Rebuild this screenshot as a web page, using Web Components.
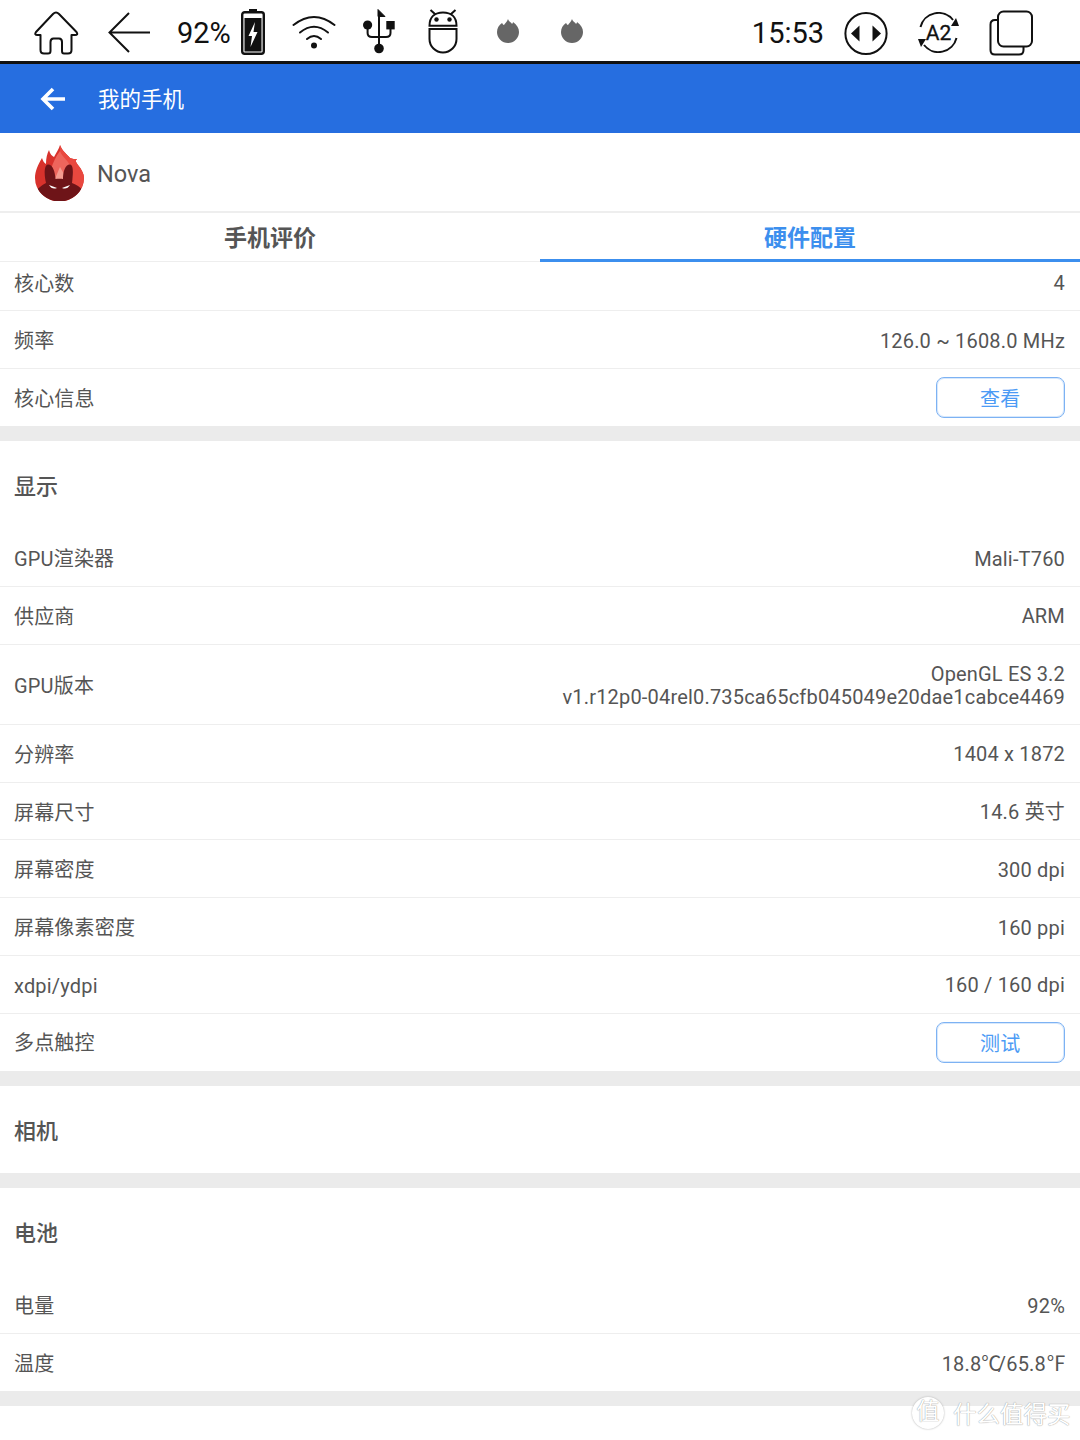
<!DOCTYPE html>
<html lang="zh">
<head>
<meta charset="utf-8">
<title>我的手机</title>
<style>
  html, body { margin: 0; background: #fff; }
  body {
    width: 1080px;
    min-height: 1440px;
    position: relative;
    overflow: hidden;
    font-family: Roboto, "Noto Sans CJK SC", sans-serif;
    color: #555;
  }
</style>
</head>
<body>
<status-bar></status-bar>
<app-bar title="我的手机"></app-bar>
<device-head name="Nova"></device-head>
<tab-strip left="手机评价" right="硬件配置"></tab-strip>

<spec-section>
  <spec-row first label="核心数" value="4"></spec-row>
  <spec-row label="频率" value="126.0 ~ 1608.0 MHz"></spec-row>
  <spec-row label="核心信息" action="查看" plain></spec-row>
</spec-section>

<spec-section heading="显示">
  <spec-row label="GPU渲染器" value="Mali-T760"></spec-row>
  <spec-row label="供应商" value="ARM"></spec-row>
  <spec-row tall label="GPU版本" value="OpenGL ES 3.2&#10;v1.r12p0-04rel0.735ca65cfb045049e20dae1cabce4469"></spec-row>
  <spec-row label="分辨率" value="1404 x 1872"></spec-row>
  <spec-row label="屏幕尺寸" value="14.6 英寸"></spec-row>
  <spec-row label="屏幕密度" value="300 dpi"></spec-row>
  <spec-row label="屏幕像素密度" value="160 ppi"></spec-row>
  <spec-row label="xdpi/ydpi" value="160 / 160 dpi"></spec-row>
  <spec-row label="多点触控" action="测试" plain></spec-row>
</spec-section>

<spec-section heading="相机"></spec-section>

<spec-section heading="电池">
  <spec-row label="电量" value="92%"></spec-row>
  <spec-row label="温度" value="18.8℃/65.8℉" plain></spec-row>
</spec-section>

<water-mark></water-mark>

<script>
// 顶部电子墨水屏状态栏
class StatusBar extends HTMLElement {
  connectedCallback() {
    this.attachShadow({ mode: 'open' });
    const flame = `<path d="M11 0 C12 3 14 3 15 5 C16 4 16 3 16 3 C20 6 22 9 22 13 A11 11 0 0 1 0 13 C0 9 2 6 5 4 C6 5 6 6 7 6 C8 4 10 3 11 0 Z" fill="#666"/>`;
    this.shadowRoot.innerHTML = `
      <style>
        :host {
          display: flex;
          align-items: flex-start;
          box-sizing: border-box;
          height: 64px;
          border-bottom: 3px solid #111;
          color: #111;
          font-size: 29px;
        }
        svg { display: block; flex: none; fill: none; stroke: #111; stroke-width: 2; }
        span { flex: none; line-height: 66px; height: 60px; }
        .home { margin: 11px 0 0 34px; }
        .back { margin: 12px 0 0 29px; }
        .pct { margin-left: 26px; }
        .bat { margin: 9px 0 0 10px; }
        .wifi { margin: 14px 0 0 27px; }
        .usb { margin: 9px 0 0 27px; }
        .droid { margin: 9px 0 0 31px; }
        .fl1 { margin: 19px 0 0 37px; }
        .fl2 { margin: 19px 0 0 42px; }
        .time { margin-left: 169px; }
        .arrows { margin: 11px 0 0 20px; }
        .a2 { margin: 12px 0 0 30px; }
        .win { margin: 10px 0 0 29px; }
        text { font: 400 21px Roboto, sans-serif; fill: #111; stroke: #111; stroke-width: .3; }
      </style>
      <svg class="home" width="45" height="44" viewBox="0 0 45 44" stroke-linejoin="round">
        <path d="M22 1.5 Q23.5 1.5 25 3 L42.5 21 Q44.5 24 41 24 H37.5 V39 Q37.5 42.5 34 42.5 H30 Q28 42.5 28 40 V31 Q28 27.5 25 27.5 H19.5 Q16.5 27.5 16.5 31 V40 Q16.5 42.5 14 42.5 H10 Q6.5 42.5 6.5 39 V24 H3.5 Q0 24 2 21 L19 3 Q20.5 1.5 22 1.5 Z"/>
      </svg>
      <svg class="back" width="43" height="42" viewBox="0 0 43 42">
        <path d="M21 1 L1.5 20.5 L21 40 M1.5 20.5 H42"/>
      </svg>
      <span class="pct">92%</span>
      <svg class="bat" width="24" height="46" viewBox="0 0 24 46">
        <rect x="8" y="0" width="8" height="3" fill="#111" stroke="none"/>
        <rect x="1.2" y="3.2" width="21.6" height="41.6" rx="2.5" stroke-width="2.4"/>
        <rect x="3.5" y="9" width="17" height="33.5" fill="#111" stroke="none"/>
        <path d="M14 13 L7.5 27 H11 L9.5 38 L16.5 23 H12.5 Z" fill="#fff" stroke="none"/>
      </svg>
      <svg class="wifi" width="44" height="35" viewBox="0 0 44 35" stroke-width="2.8" stroke-linecap="round">
        <path d="M1.5 11 Q22 -5 42.5 11"/>
        <path d="M8 18.5 Q22 7 36 18.5"/>
        <path d="M15 25 Q22 19 29 25"/>
        <circle cx="22" cy="31.5" r="3" fill="#111" stroke="none"/>
      </svg>
      <svg class="usb" width="33" height="46" viewBox="0 0 33 46" stroke-width="2.4">
        <path d="M16 4 V38"/>
        <path d="M15 0.5 L22 7.5 H15 Z" fill="#111" stroke="#111" stroke-width="1"/>
        <circle cx="16" cy="39.5" r="4.8" fill="#111" stroke="none"/>
        <circle cx="4.6" cy="16" r="4.6" fill="#111" stroke="none"/>
        <rect x="23.3" y="12" width="8.4" height="8.4" fill="#111" stroke="none"/>
        <path d="M4.6 19 V24 Q4.6 28 9 28 H16 M27.5 19 V24 Q27.5 28 23 28 H16"/>
      </svg>
      <svg class="droid" width="33" height="46" viewBox="0 0 33 46" stroke-width="2.6">
        <path d="M2.5 16.7 C2.5 8 8 3.5 16 3.5 C24 3.5 29.5 8 29.5 16.7 Z"/>
        <path d="M2.5 20 H29.5 V30 A13.5 13.5 0 0 1 2.5 30 Z"/>
        <path d="M8.5 5.5 L3.5 1 M23.5 5.5 L28.5 1"/>
        <circle cx="9.5" cy="10.5" r="2.2" fill="#111" stroke="none"/>
        <circle cx="22.5" cy="10.5" r="2.2" fill="#111" stroke="none"/>
      </svg>
      <svg class="fl1" width="22" height="24" viewBox="0 0 22 24" style="stroke:none">${flame}</svg>
      <svg class="fl2" width="22" height="24" viewBox="0 0 22 24" style="stroke:none">${flame}</svg>
      <span class="time">15:53</span>
      <svg class="arrows" width="44" height="45" viewBox="0 0 44 45" stroke-width="2.4">
        <circle cx="22" cy="22.5" r="20.6"/>
        <path d="M15.5 14.5 V30.5 L7 22.5 Z M28.5 14.5 V30.5 L37 22.5 Z" fill="#111" stroke="none"/>
      </svg>
      <svg class="a2" width="42" height="41" viewBox="0 0 42 41" stroke-width="2">
        <path d="M2.5 15 A18.5 18.5 0 0 1 35 8"/>
        <path d="M38.5 26 A18.5 18.5 0 0 1 6 33"/>
        <path d="M33 14 L41 14 L38 6 Z M8 27 L0 27 L3 35 Z" fill="#111" stroke="none"/>
        <text x="20.5" y="27.5" text-anchor="middle">A2</text>
      </svg>
      <svg class="win" width="45" height="47" viewBox="0 0 45 47" stroke-width="2.6">
        <path d="M8.5 10 H6 Q1.5 10 1.5 14.5 V40 Q1.5 44.5 6 44.5 H30 Q34.5 44.5 34.5 40 V37"/>
        <rect x="9" y="1.5" width="34" height="35" rx="5.5"/>
      </svg>
    `;
  }
}

class AppBar extends HTMLElement {
  connectedCallback() {
    this.attachShadow({ mode: 'open' });
    this.shadowRoot.innerHTML = `
      <style>
        :host {
          display: flex;
          align-items: center;
          height: 69px;
          padding-left: 40px;
          background: #266ee0;
          color: #fff;
          font-size: 21.5px;
        }
        svg { display: block; margin-right: 33px; }
        span { margin-top: 2px; line-height: 30px; }
      </style>
      <svg width="25" height="24" viewBox="0 0 25 24" fill="none" stroke="#fff" stroke-width="3.6">
        <path d="M13 2 L3 12 L13 22 M3 12 H25"/>
      </svg>
      <span>${this.getAttribute('title')}</span>
    `;
  }
}

// 安兔兔图标 + 设备名
class DeviceHead extends HTMLElement {
  connectedCallback() {
    this.attachShadow({ mode: 'open' });
    this.shadowRoot.innerHTML = `
      <style>
        :host {
          display: flex;
          align-items: center;
          box-sizing: border-box;
          height: 80px;
          padding: 0 0 0 34px;
          border-bottom: 2px solid #eee;
          color: #555;
          font-size: 23.5px;
        }
        svg { display: block; margin-right: 13px; margin-top: 2px; }
        span { margin-top: 4px; }
      </style>
      <svg width="50" height="56" viewBox="0 0 50 56">
        <path d="M26 0 C28 6 33 9 36 13 C38 14 41 14 43 14 C41 16 42 17 44 20 C48 25 50 29 50 33 A24.5 23.5 0 0 1 1 33 C1 26 4 20 8 13 C9 16 10 18 12 19 C12 13 13 9 15 5 C16 9 18 11 20 12 C22 8 25 4 26 0 Z" fill="#d8322c"/>
        <path d="M26 0 C28 6 33 9 36 13 C38 14 41 14 43 14 C41 16 42 17 44 20 C48 25 50 29 50 33 A24.5 23.5 0 0 1 26 56 Z" fill="#e9483f"/>
        <path d="M26 6 C28 12 35 16 38 24 C40 30 38 36 36 38 H16 C14 32 18 16 26 6 Z" fill="#ee655c"/>
        <path d="M26 22 L34 36 H20 Z" fill="#f49b90"/>
        <path d="M12 38 C10 30 10 20 14 19.5 C19 19.5 21 27 21.5 34 C24 33.5 27 33.5 29 34 C29 27 31 19.5 36 19.5 C40 20 39 30 38 38 C43 40 46 42 47.25 43.8 A24.5 23.5 0 0 1 3.75 43.8 C6 42 8 40 12 38 Z" fill="#6e1418"/>
        <path d="M15 40 L23 43 Q18 45 15 40 Z M36 40 L28 43 Q33 45 36 40 Z" fill="#fff"/>
      </svg>
      <span>${this.getAttribute('name')}</span>
    `;
  }
}

class TabStrip extends HTMLElement {
  connectedCallback() {
    this.attachShadow({ mode: 'open' });
    this.shadowRoot.innerHTML = `
      <style>
        :host {
          display: grid;
          grid-template-columns: 1fr 1fr;
          box-sizing: border-box;
          height: 49px;
          font-size: 23px;
          font-weight: 700;
        }
        div { text-align: center; line-height: 51px; color: #555; box-sizing: border-box; height: 49px; border-bottom: 1px solid #eee; }
        .on { color: #3c8fee; border-bottom: 3px solid #3c8fee; }
      </style>
      <div>${this.getAttribute('left')}</div>
      <div class="on">${this.getAttribute('right')}</div>
    `;
  }
}

const sectionTpl = document.createElement('template');
sectionTpl.innerHTML = `
  <style>
    :host {
      display: block;
      border-bottom: 15px solid #ebebeb;
    }
    h2 {
      margin: 0;
      height: 87.4px;
      line-height: 91px;
      padding-left: 14px;
      font-size: 22px;
      font-weight: 500;
      color: #555;
    }
    h2:empty { display: none; }
    ::slotted(:first-child) { margin-top: 0.8px; }
  </style>
  <h2></h2>
  <slot></slot>
`;

class SpecSection extends HTMLElement {
  connectedCallback() {
    this.attachShadow({ mode: 'open' });
    this.shadowRoot.appendChild(sectionTpl.content.cloneNode(true));
    this.shadowRoot.querySelector('h2').textContent = this.getAttribute('heading') || '';
  }
}

const rowTpl = document.createElement('template');
rowTpl.innerHTML = `
  <style>
    :host {
      display: flex;
      justify-content: space-between;
      align-items: center;
      box-sizing: border-box;
      height: 57.8px;
      padding: 3px 15px 0 14px;
      border-bottom: 1px solid #eee;
      font-size: 20px;
      letter-spacing: 0.18px;
      color: #555;
    }
    :host([plain]) { height: 57px; padding-top: 2px; border-bottom: 0; }
    :host([first]) { height: 48.5px; padding-top: 0; padding-bottom: 6px; }
    :host([tall]) { height: 80px; }
    .label { line-height: 24px; }
    .value { text-align: right; line-height: 23px; white-space: pre-line; }
    .unit { font-family: "Noto Sans CJK SC", sans-serif; letter-spacing: -3.5px; }
    .unit:last-child { margin-right: 2.5px; }
    .btn {
      box-sizing: border-box;
      width: 129.5px;
      height: 41px;
      margin-top: -1.5px;
      line-height: 42px;
      text-align: center;
      border: 1px solid #7db2f3;
      box-shadow: inset 0 0 0 1px rgba(141, 189, 245, .35);
      border-radius: 8px;
      color: #4c9bf5;
    }
  </style>
  <span class="label"></span>
  <span class="value"></span>
`;

class SpecRow extends HTMLElement {
  connectedCallback() {
    this.attachShadow({ mode: 'open' });
    this.shadowRoot.appendChild(rowTpl.content.cloneNode(true));
    this.shadowRoot.querySelector('.label').textContent = this.getAttribute('label');
    const value = this.shadowRoot.querySelector('.value');
    const action = this.getAttribute('action');
    if (action) {
      value.className = 'btn';
      value.textContent = action;
    } else {
      value.innerHTML = this.getAttribute('value').replace(/[℃℉]/g, '<span class="unit">$&</span>');
    }
  }
}

// 右下角水印，压在内容上面
class WaterMark extends HTMLElement {
  connectedCallback() {
    this.attachShadow({ mode: 'open' });
    this.shadowRoot.innerHTML = `
      <style>
        :host {
          position: absolute;
          left: 912px;
          top: 1396px;
          display: flex;
          align-items: center;
          gap: 9px;
          color: #fff;
          font-size: 23.5px;
          text-shadow: 0 0 1px #999, 0 0 1px #bbb;
        }
        .seal {
          width: 32px;
          height: 32px;
          line-height: 30px;
          text-align: center;
          border-radius: 50%;
          background: #fff;
          box-shadow: 0 0 2px #aaa;
          font-size: 23px;
        }
      </style>
      <span class="seal">值</span>
      <span>什么值得买</span>
    `;
  }
}

customElements.define('status-bar', StatusBar);
customElements.define('app-bar', AppBar);
customElements.define('device-head', DeviceHead);
customElements.define('tab-strip', TabStrip);
customElements.define('spec-section', SpecSection);
customElements.define('spec-row', SpecRow);
customElements.define('water-mark', WaterMark);
</script>
</body>
</html>
